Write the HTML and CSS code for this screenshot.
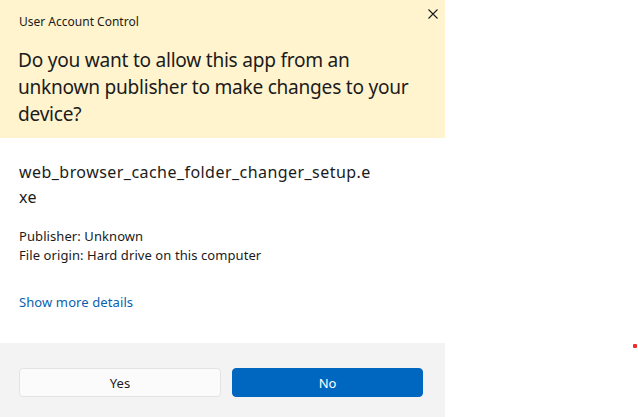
FILE: index.html
```html
<!DOCTYPE html>
<html>
<head>
<meta charset="utf-8">
<link rel="stylesheet" href="styles.css">
</head>
<body>
<div class="dialog">
  <div class="header">
    <div class="caption">User Account Control</div>
    <button class="close" aria-label="Close">
      <svg width="10" height="10" viewBox="0 0 10 10"><path d="M0.5 0.5 L9.5 9.5 M9.5 0.5 L0.5 9.5" stroke="#1b1b1b" stroke-width="1.1" fill="none"/></svg>
    </button>
    <h1 class="title">Do you want to allow this app from an unknown publisher to make changes to your device?</h1>
  </div>
  <div class="content">
    <div class="filename">web_browser_cache_folder_changer_setup.e<br>xe</div>
    <div class="meta">
      <div>Publisher: Unknown</div>
      <div>File origin: Hard drive on this computer</div>
    </div>
    <a class="more" href="#">Show more details</a>
  </div>
  <div class="footer">
    <button class="btn yes">Yes</button>
    <button class="btn no">No</button>
  </div>
</div>
<div class="dot"></div>
</body>
</html>
```
FILE: styles.css
```css
html, body {
  margin: 0;
  padding: 0;
  background: #ffffff;
  font-family: "Noto Sans", "Open Sans", sans-serif;
  color: #1b1b1b;
}
.dialog {
  width: 445px;
  height: 417px;
  display: flex;
  flex-direction: column;
  background: #ffffff;
}
.header {
  position: relative;
  background: #fff4ce;
  height: 138px;
  box-sizing: border-box;
  padding: 14px 18px 0 18px;
}
.caption {
  font-size: 12px;
  line-height: 16px;
  padding-left: 1px;
}
.close {
  position: absolute;
  top: 9px;
  right: 7px;
  width: 10px;
  height: 10px;
  padding: 0;
  border: 0;
  background: transparent;
  display: flex;
}
.title {
  margin: 17px 0 0 0;
  font-size: 19.1px;
  font-weight: normal;
  line-height: 27px;
  letter-spacing: -0.25px;
}
.content {
  flex: 1;
  padding: 22px 19px 0 19px;
}
.filename {
  font-size: 16px;
  line-height: 24.5px;
  letter-spacing: 0.45px;
}
.meta {
  margin-top: 18px;
  font-size: 13px;
  line-height: 19px;
  letter-spacing: 0.08px;
}
.more {
  display: block;
  margin-top: 28px;
  font-size: 13px;
  line-height: 19px;
  letter-spacing: 0.1px;
  color: #0a5fb0;
  text-decoration: none;
}
.footer {
  height: 74px;
  box-sizing: border-box;
  background: #f3f3f3;
  padding: 25px 22px 0 19px;
  display: flex;
  gap: 11px;
  align-items: flex-start;
}
.btn {
  height: 29px;
  border-radius: 4px;
  font-family: inherit;
  font-size: 13px;
  padding: 0;
}
.yes {
  width: 202px;
  background: #fbfbfb;
  border: 1px solid #e3e3e3;
  color: #1b1b1b;
}
.no {
  width: 191px;
  background: #0067c0;
  border: 1px solid #0067c0;
  color: #ffffff;
}
.dot {
  position: absolute;
  left: 633px;
  top: 344px;
  width: 4px;
  height: 4px;
  border-radius: 1px;
  background: #f52a2a;
}
```
